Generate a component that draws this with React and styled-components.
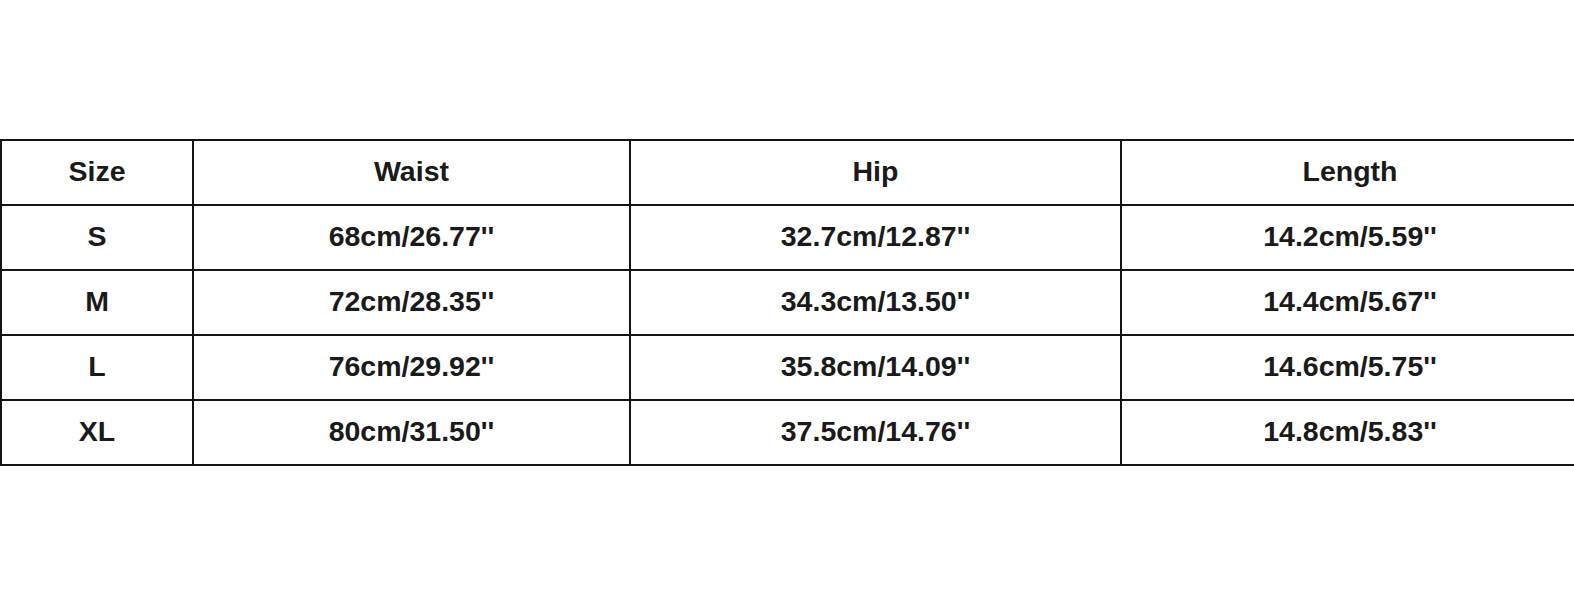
import React from "react";
import styled, { createGlobalStyle } from "styled-components";

const Global = createGlobalStyle`
  html, body { margin: 0; padding: 0; background: #fff; overflow: hidden; }
  body { width: 1574px; height: 611px; font-family: "Liberation Sans", Arial, sans-serif; }
`;

const Page = styled.div`
  width: 1574px;
  height: 611px;
  padding-top: 140px;
  box-sizing: border-box;
  overflow: hidden;
`;

const Table = styled.div`
  display: grid;
  grid-template-columns: 192px 437px 491px 458px;
  grid-auto-rows: 65px;
  width: 1580px;
  border-top: 2px solid #141414;
  border-left: 2px solid #141414;
  box-sizing: border-box;
  margin-top: -1px;
`;

const Cell = styled.div`
  display: flex;
  align-items: center;
  justify-content: center;
  border-right: 2px solid #141414;
  border-bottom: 2px solid #141414;
  font-weight: bold;
  font-size: 28.5px;
  color: #1a1a1a;
  box-sizing: border-box;
  padding-bottom: 2px;
`;

const headers = ["Size", "Waist", "Hip", "Length"];
const rows = [
  ["S", "68cm/26.77''", "32.7cm/12.87''", "14.2cm/5.59''"],
  ["M", "72cm/28.35''", "34.3cm/13.50''", "14.4cm/5.67''"],
  ["L", "76cm/29.92''", "35.8cm/14.09''", "14.6cm/5.75''"],
  ["XL", "80cm/31.50''", "37.5cm/14.76''", "14.8cm/5.83''"],
];

export default function App() {
  return (
    <>
      <Global />
      <Page>
        <Table>
          {headers.map((h) => (
            <Cell key={h}>{h}</Cell>
          ))}
          {rows.map((r) =>
            r.map((c, i) => <Cell key={r[0] + i}>{c}</Cell>)
          )}
        </Table>
      </Page>
    </>
  );
}
